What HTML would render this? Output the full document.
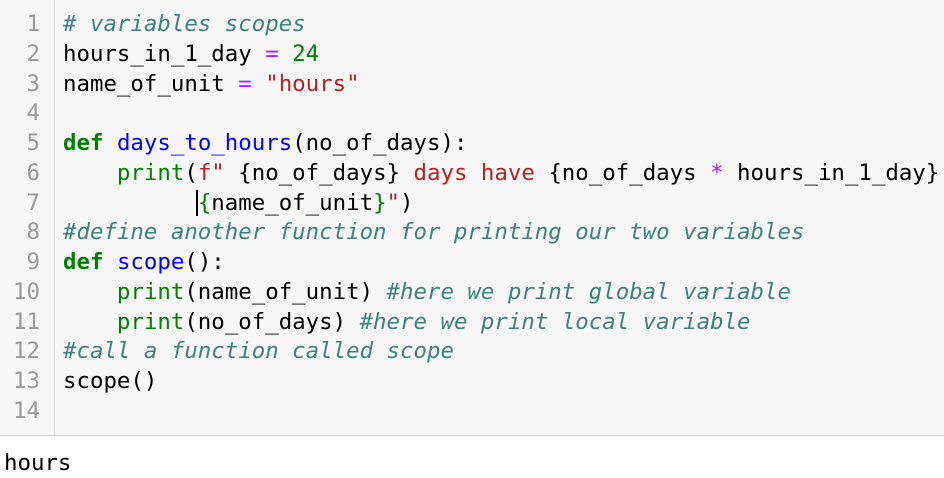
<!DOCTYPE html>
<html><head><style>
body{margin:0;width:944px;height:478px;background:#fff;overflow:hidden;font-family:"DejaVu Sans Mono",monospace;}
.cell{position:absolute;left:0;top:0;width:944px;height:435px;background:#f7f7f7;border-bottom:1px solid #cfcfcf;}
.gut{position:absolute;left:0;top:0;width:54px;height:435px;border-right:1px solid #ddd;}
pre{margin:0;font-family:"DejaVu Sans Mono",monospace;font-size:22.4px;line-height:29.77px;position:absolute;top:10px;}
.ln{left:0;width:40px;text-align:right;color:#999;}
.code{left:63px;color:#000;}
.c{color:#408080;font-style:italic}.k{color:#008000;font-weight:bold}.f{color:#0000ff}.o{color:#aa22ff}.s{color:#ba2121}.n{color:#008000}.b{color:#008000}
.cur{border-left:2px solid #000;margin-left:-2px}
.out{position:absolute;left:4px;top:450px;font-size:22.4px;font-family:"DejaVu Sans Mono",monospace;}
</style></head><body>
<div class="cell"><div class="gut"></div>
<pre class="ln">1
2
3
4
5
6
7
8
9
10
11
12
13
14</pre>
<pre class="code"><span class="c"># variables scopes</span>
hours_in_1_day <span class="o">=</span> <span class="n">24</span>
name_of_unit <span class="o">=</span> <span class="s">"hours"</span>

<span class="k">def</span> <span class="f">days_to_hours</span>(no_of_days):
    <span class="b">print</span>(<span class="s">f"</span> {no_of_days}<span class="s"> days have </span>{no_of_days <span class="o">*</span> hours_in_1_day}
          <span class="cur"></span><span class="n">{</span>name_of_unit<span class="n">}</span><span class="s">"</span>)
<span class="c">#define another function for printing our two variables</span>
<span class="k">def</span> <span class="f">scope</span>():
    <span class="b">print</span>(name_of_unit) <span class="c">#here we print global variable</span>
    <span class="b">print</span>(no_of_days) <span class="c">#here we print local variable</span>
<span class="c">#call a function called scope</span>
scope()
</pre></div>
<div class="out">hours</div>
</body></html>
